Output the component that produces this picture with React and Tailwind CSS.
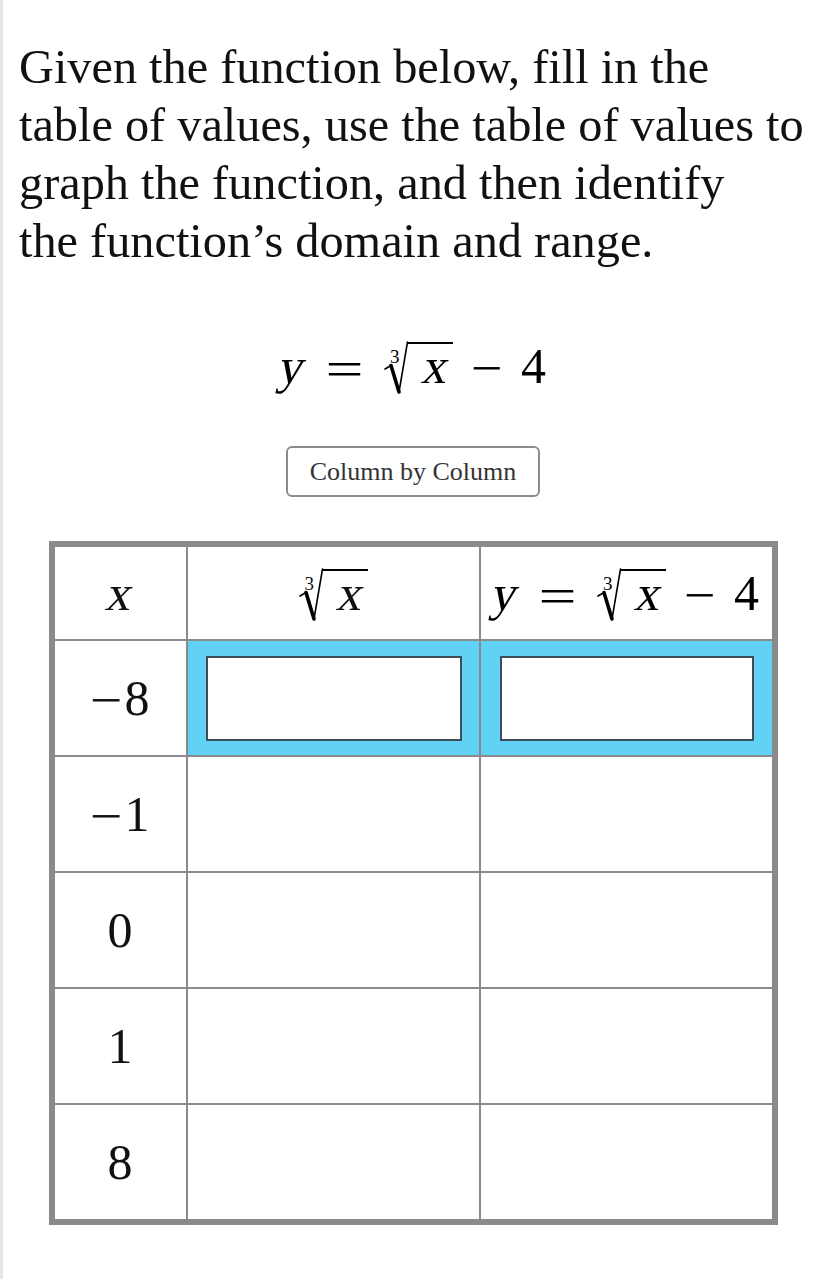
import React from "react";

// math letter: roman serif glyph slanted like math italic
function M({ children }) {
  return <span className="inline-block -skew-x-12">{children}</span>;
}

// cube root of x, drawn like the KaTeX radical
function Radical() {
  return (
    <span className="relative inline-block pl-[23px]">
      <svg
        className="absolute left-0 top-0"
        width="26"
        height="54"
        viewBox="0 0 26 54"
        fill="none"
        stroke="black"
        strokeLinecap="round"
      >
        <path d="M1 28 L7 24.5" strokeWidth="1.6" />
        <path d="M7 24.5 L15 51" strokeWidth="3.6" />
        <path d="M15 51 L23.5 1" strokeWidth="1.6" />
      </svg>
      <span className="absolute left-[6px] top-[6px] text-[19px] leading-none">3</span>
      <span className="inline-block border-t-2 border-black pl-[17px] pr-[4px] leading-[44px]">
        <M>x</M>
      </span>
    </span>
  );
}

function Formula() {
  return (
    <span className="inline-flex items-baseline text-[50px] leading-none text-black">
      <M>y</M>
      <span className="ml-[22px] inline-block w-[35px] text-center scale-x-[1.35] translate-y-[3px]">=</span>
      <span className="ml-[22px]">
        <Radical />
      </span>
      <span className="ml-[18px] inline-block w-[31px] text-center scale-x-[1.12] translate-y-[2px]">−</span>
      <span className="ml-[19px]">4</span>
    </span>
  );
}

const rows = [
  { sign: true, n: "8" },
  { sign: true, n: "1" },
  { sign: false, n: "0" },
  { sign: false, n: "1" },
  { sign: false, n: "8" },
];

export default function App() {
  return (
    <div className="min-h-screen bg-white border-l-[3px] border-[#e6e6e6] pl-[5px] font-['Liberation_Serif','Times_New_Roman',serif] text-[#111]">
      {/* Question */}
      <div className="pt-[38px] pl-[11px] text-[48.3px] leading-[58px] whitespace-nowrap">
        <div>Given the function below, fill in the</div>
        <div>table of values, use the table of values to</div>
        <div>graph the function, and then identify</div>
        <div>the function’s domain and range.</div>
      </div>

      {/* Equation */}
      <div className="mt-[71px] flex justify-center">
        <Formula />
      </div>

      {/* Mode button */}
      <div className="mt-[55px] flex justify-center">
        <button className="w-[254px] h-[51px] rounded-[6px] border-2 border-[#8c8c8c] bg-white text-[26px] text-[#333]">
          Column by Column
        </button>
      </div>

      {/* Table of values */}
      <div className="mx-auto mt-[44px] w-[729px] border-[6px] border-[#8a8a8a]">
        <div className="flex h-[94px] border-b-2 border-[#8a8a8a]">
          <div className="w-[133px] border-r-2 border-[#8a8a8a] flex items-center justify-center text-[50px] leading-none">
            <M>x</M>
          </div>
          <div className="w-[293px] border-r-2 border-[#8a8a8a] flex items-center justify-center text-[50px] leading-none">
            <Radical />
          </div>
          <div className="flex-1 flex items-center justify-center">
            <Formula />
          </div>
        </div>

        {rows.map((row, i) => (
          <div
            key={i}
            className={
              i === rows.length - 1
                ? "flex h-[114px]"
                : "flex h-[116px] border-b-2 border-[#8a8a8a]"
            }
          >
            <div className="w-[133px] border-r-2 border-[#8a8a8a] flex items-center justify-center text-[50px] leading-none">
              <span className="inline-flex items-baseline">
                {row.sign && (
                  <span className="mr-[4px] inline-block w-[30px] text-center scale-x-[1.15] translate-y-[2px]">−</span>
                )}
                <span>{row.n}</span>
              </span>
            </div>
            {i === 0 ? (
              <>
                <div className="w-[293px] border-r-2 border-[#8a8a8a] bg-[#62d1f6] pl-[18px] pr-[17px] pt-[15px] pb-[14px] flex">
                  <div className="flex-1 bg-white border-2 border-[#3f4d58]" />
                </div>
                <div className="flex-1 bg-[#62d1f6] pl-[19px] pr-[18px] pt-[15px] pb-[14px] flex">
                  <div className="flex-1 bg-white border-2 border-[#3f4d58]" />
                </div>
              </>
            ) : (
              <>
                <div className="w-[293px] border-r-2 border-[#8a8a8a]" />
                <div className="flex-1" />
              </>
            )}
          </div>
        ))}
      </div>
    </div>
  );
}
